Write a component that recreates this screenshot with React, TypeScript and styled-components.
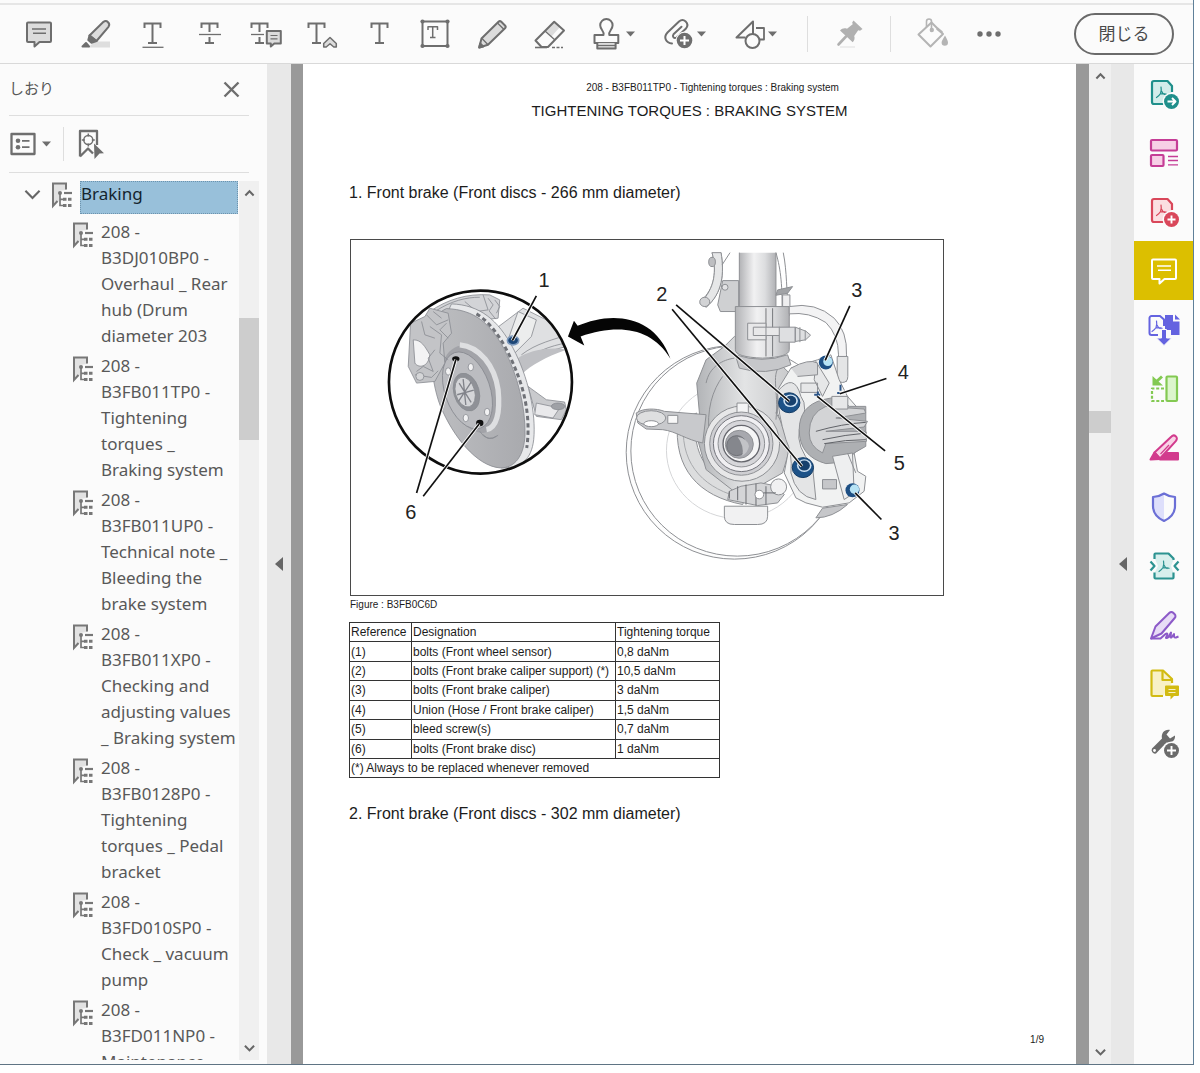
import React from "react";
import styled, { createGlobalStyle } from "styled-components";

const ink = "#6e6e6e";
const soft = "#dcdcdc";
const line = "#dedede";

const GlobalStyle = createGlobalStyle`
  *, *::before, *::after { box-sizing: border-box; }
  body {
    margin: 0;
    background: #ffffff;
    font-family: "Noto Sans", "Open Sans", "Noto Sans CJK JP", sans-serif;
    color: #585858;
  }
  button { font: inherit; color: inherit; background: none; border: 0; padding: 0; cursor: pointer; }
  svg { display: block; flex: none; }
`;

const Shell = styled.div`
  height: 100vh;
  padding: 0 6px 8px 0;
`;

const Window = styled.div`
  height: 100%;
  display: flex;
  flex-direction: column;
  background: #fbfbfb;
  border-right: 1px solid #5f8099;
  border-bottom: 1px solid #5f7484;
  overflow: hidden;
`;

/* ---------- Top toolbar ---------- */

const Toolbar = styled.header`
  flex: none;
  margin-top: 3px;
  height: 61px;
  border-top: 2px solid #e6e6e6;
  border-bottom: 1px solid #d9d9d9;
  padding: 0 19px 0 11px;
  display: flex;
  align-items: center;
`;

const MarkupTools = styled.div`
  width: 566px;
  display: grid;
  grid-template-columns: repeat(10, 1fr);
  justify-items: center;
`;

const ToolButton = styled.button<{ $width?: number }>`
  width: ${(p) => (p.$width ? `${p.$width}px` : "auto")};
  height: 40px;
  display: flex;
  align-items: center;
  justify-content: center;
`;

const ToolToggle = styled.button`
  height: 26px;
  margin-right: 2px;
`;

const Divider = styled.span<{ $height: number }>`
  width: 1px;
  height: ${(p) => p.$height}px;
  background: ${line};
`;

const DividerGap = styled.span`
  width: 17px;
`;

const IconGap = styled.span`
  width: 6px;
`;

const CloseButton = styled.button`
  margin-left: auto;
  width: 100px;
  height: 42px;
  border: 2px solid #6a6a6a;
  border-radius: 21px;
  font-family: "Noto Sans CJK JP", sans-serif;
  font-size: 17px;
  line-height: 24px;
  padding-bottom: 2px;
  color: #4b4b4b;
`;

/* ---------- Body ---------- */

const Body = styled.div`
  flex: 1;
  min-height: 0;
  display: flex;
`;

const Sidebar = styled.aside`
  flex: none;
  width: 267px;
  display: flex;
  flex-direction: column;
`;

const SidebarHead = styled.div`
  margin: 0 18px 0 9px;
  height: 52px;
  padding-right: 9px;
  border-bottom: 1px solid ${line};
  display: flex;
  align-items: center;
  justify-content: space-between;
`;

const SidebarTitle = styled.h2`
  margin: 0;
  padding-bottom: 4px;
  font-family: "Noto Sans CJK JP", sans-serif;
  font-weight: 400;
  font-size: 15px;
  line-height: 24px;
`;

const SidebarTools = styled.div`
  margin: 0 18px 0 9px;
  height: 57px;
  border-bottom: 1px solid ${line};
  display: flex;
  align-items: center;
  gap: 12px;
`;

const TreeArea = styled.div`
  flex: 1;
  min-height: 0;
  margin: 8px 8px 4px 0;
  display: flex;
`;

const Tree = styled.ul`
  flex: 1;
  min-width: 0;
  margin: 0;
  padding: 0;
  list-style: none;
  overflow: hidden;
  font-size: 17px;
  line-height: 26px;
`;

const GroupRow = styled.div`
  display: flex;
  align-items: flex-start;
  gap: 8px;
  padding: 0 1px 0 24px;
  margin-bottom: 5px;
`;

const GroupLabel = styled.button`
  flex: 1;
  height: 33px;
  padding: 0 0 8px 1px;
  background: #98c0da;
  outline: 1px dotted #6d93ad;
  outline-offset: -1px;
  color: #14242e;
  text-align: left;
`;

const Children = styled.ul`
  margin: 0;
  padding: 0 0 0 72px;
  list-style: none;
  display: flex;
  flex-direction: column;
  gap: 4px;
`;

const Leaf = styled.li`
  display: flex;
  align-items: flex-start;
  gap: 8px;
`;

const LeafIcon = styled.span`
  padding-top: 2px;
`;

const LeafLabel = styled.button`
  white-space: pre;
  text-align: left;
`;

const ScrollTrack = styled.div<{ $width: number }>`
  flex: none;
  width: ${(p) => p.$width}px;
  background: #f0f0f0;
  display: flex;
  flex-direction: column;
  align-items: stretch;
`;

const ScrollArrow = styled.button`
  height: 24px;
  display: flex;
  align-items: center;
  justify-content: center;
`;

const ScrollSpace = styled.span<{ $grow: number }>`
  flex: ${(p) => p.$grow} 1 0;
`;

const ScrollThumb = styled.span<{ $height: number }>`
  flex: none;
  height: ${(p) => p.$height}px;
  background: #cdcdcd;
`;

const Gutter = styled.button<{ $width: number }>`
  flex: none;
  width: ${(p) => p.$width}px;
  background: #e8e8e8;
  display: flex;
  align-items: center;
  justify-content: center;
`;

/* ---------- Document ---------- */

const Viewer = styled.main`
  flex: 1;
  min-width: 0;
  display: flex;
  background: #999999;
  padding: 0 13px 0 12px;
`;

const Page = styled.article`
  flex: 1;
  min-width: 0;
  background: #ffffff;
  padding: 16px 32px 16px 46px;
  display: flex;
  flex-direction: column;
  align-items: flex-start;
  overflow: hidden;
  font-family: "Liberation Sans", Arial, sans-serif;
  color: #1c1c1c;
`;

const RunningHead = styled.p`
  align-self: center;
  margin: 0;
  padding-left: 32px;
  font-size: 10px;
  line-height: 16px;
`;

const DocTitle = styled.h1`
  align-self: center;
  margin: 3px 14px 0 0;
  font-weight: 400;
  font-size: 15px;
  line-height: 24px;
`;

const SectionTitle = styled.h2<{ $top: number }>`
  margin: ${(p) => p.$top}px 0 0;
  font-weight: 400;
  font-size: 16px;
  line-height: 24px;
`;

const Figure = styled.figure`
  width: 100%;
  max-width: 595px;
  margin: 34px 0 0;
  padding-left: 1px;
`;

const Plate = styled.svg`
  width: 100%;
  height: auto;
  border: 1px solid #4a4a4a;
`;

const Caption = styled.figcaption`
  padding-top: 1px;
  font-size: 10px;
  line-height: 16px;
`;

const Torques = styled.table`
  width: 371px;
  height: 156px;
  margin-top: 9px;
  border-collapse: collapse;
  table-layout: fixed;
  font-size: 12px;
  line-height: 16px;

  th, td {
    height: 19px;
    padding: 0 1px;
    border: 1px solid #333333;
    font-weight: 400;
    text-align: left;
    white-space: nowrap;
  }
`;

const Folio = styled.p`
  align-self: flex-end;
  margin: auto 0 0;
  font-size: 10px;
  line-height: 16px;
`;

/* ---------- Right rail ---------- */

const Rail = styled.nav`
  flex: none;
  width: 59px;
  display: flex;
  flex-direction: column;
`;

const RailButton = styled.button<{ $active?: boolean }>`
  height: 59px;
  display: flex;
  align-items: center;
  justify-content: center;
  background: ${(p) => (p.$active ? "#dcbf00" : "transparent")};
`;

/* ---------- Icons ---------- */

const Glyph = ({ children, w = 36, h = 36, color = ink, sw = 2 }: {
  children: React.ReactNode; w?: number; h?: number; color?: string; sw?: number;
}) => (
  <svg width={w} height={h} viewBox={`0 0 ${w} ${h}`} fill="none" stroke={color} strokeWidth={sw} strokeLinejoin="round" aria-hidden="true">
    {children}
  </svg>
);

const Caret = () => (
  <svg width="9" height="6" viewBox="0 0 9 6" aria-hidden="true"><path d="M0 0.5h9L4.500 5.500z" fill={ink} /></svg>
);

const SerifT = ({ x = 18.500 }: { x?: number }) => (
  <path strokeLinejoin="miter" d={`M${x - 8} 12V7.500h16V12M${x} 7.500v19.500M${x - 4.500} 27h9`} />
);

const CommentIcon = ({ color = ink, fill = soft }: { color?: string; fill?: string }) => (
  <Glyph color={color}>
    <path d="M7 6.500h22a1 1 0 0 1 1 1v17.500a1 1 0 0 1-1 1H18.500l-5 4.500V26H7a1 1 0 0 1-1-1V7.500a1 1 0 0 1 1-1z" fill={fill} />
    <path d="M11 13h14M12 17.200h13" strokeWidth="1.400" />
  </Glyph>
);

const HighlighterIcon = () => (
  <Glyph>
    <path d="M10 31.500L17 25.500h15v6z" fill="#dedede" stroke="none" />
    <path d="M11.500 19.500L25.500 5.800a3.600 3.600 0 0 1 5 5L18.500 25z" fill={soft} />
    <path d="M11.500 19.500l7 5.500-5 1.800-3.200-2.800z" fill={ink} />
    <path d="M4.500 30.500l3.500-3.500 3 3.500z" fill={ink} />
  </Glyph>
);

const UnderlineIcon = () => <Glyph><SerifT /><path d="M8.500 31.300h21" strokeWidth="1.300" /></Glyph>;

const StrikeIcon = () => (
  <Glyph>
    <SerifT />
    <path d="M8 18.500h21" stroke="#fbfbfb" strokeWidth="5" />
    <path d="M8 18.500h22" strokeWidth="1.300" />
  </Glyph>
);

const ReplaceIcon = () => (
  <Glyph>
    <SerifT x={11.500} />
    <path d="M2 18.500h17" stroke="#fbfbfb" strokeWidth="5" />
    <path d="M3 18.500h13" strokeWidth="1.300" />
    <path d="M18.500 15h14v12h-7l-3.500 3.500V27h-3.500z" stroke="#fbfbfb" strokeWidth="5" />
    <path d="M18.800 15h14v12.500h-6.500l-3.500 3V27.500h-4z" fill={soft} />
    <path d="M22.500 19.500h7M22.500 22.800h7" strokeWidth="1.200" />
  </Glyph>
);

const InsertIcon = () => (
  <Glyph>
    <SerifT x={12.500} />
    <path d="M19.700 31v-3.500l6.300-6 6.300 6V31h-2.500L26 27.800 22.200 31z" stroke="#fbfbfb" strokeWidth="4" />
    <path d="M19.700 31v-3.500l6.300-6 6.300 6V31h-2.500L26 27.800 22.200 31z" fill={soft} strokeWidth="1.500" />
  </Glyph>
);

const TextIcon = () => <Glyph><SerifT /></Glyph>;

const TextBoxIcon = () => (
  <Glyph>
    <rect x="5.500" y="5.500" width="25" height="24.500" />
    {[[5.500, 5.500], [30.500, 5.500], [5.500, 30], [30.500, 30]].map(([x, y]) => (
      <circle key={`${x}-${y}`} cx={x} cy={y} r="2.100" fill={ink} stroke="none" />
    ))}
    <path strokeWidth="1.500" d="M11 14v-3.300h9.500V14M15.700 10.700V21.500M13 21.500h5.500" />
  </Glyph>
);

const PencilIcon = () => (
  <Glyph>
    <path d="M5.200 31.500l2.300-9L24.500 5.800a2 2 0 0 1 2.800 0l3.700 3.700a2 2 0 0 1 0 2.800L14 28.800z" fill={soft} />
    <path d="M8 22.500l6 6.300M23.500 7l6.300 6.300" strokeWidth="1.300" />
    <path d="M5.200 31.500l1-4 3 3z" fill={ink} />
  </Glyph>
);

const EraserIcon = () => (
  <Glyph>
    <path d="M15 14.500l9-8.500 5 5-8.500 9.500z" fill={soft} stroke="none" />
    <path d="M4.500 24.500L23.200 5.700 33 14.500 17 31h-6.500z" />
    <path d="M14 15l10 9" strokeWidth="1.300" />
    <path d="M4 31.500h12" strokeWidth="1.600" />
    <path d="M21 31.500h11" strokeWidth="1.300" strokeDasharray="3 1.500" />
  </Glyph>
);

const StampIcon = () => (
  <Glyph>
    <path d="M13.500 19c1.200-4-3.300-5-3.300-9.700a6.200 6.200 0 0 1 12.400 0c0 4.700-4.500 5.700-3.300 9.700h9v8H4.500v-8z" />
    <path d="M7.300 27v5.500h18.300V27" fill={soft} />
    <path d="M7 29.500h19" strokeWidth="1.200" />
  </Glyph>
);

const ClipIcon = () => (
  <Glyph>
    <path strokeLinecap="round" d="M11 27.500C5 27 2 21.500 6.500 16.500L18 5.500c4.500-4 11 1.500 7 7L15.500 21.500c-2.500 1.500-4.500-1-3-3.200l8-7.500" />
    <circle cx="23.500" cy="24.500" r="9" fill="#fbfbfb" stroke="none" />
    <circle cx="23.500" cy="24.500" r="7.800" fill={ink} stroke="none" />
    <path d="M23.500 20v9M19 24.500h9" stroke="#fff" />
  </Glyph>
);

const ShapesIcon = () => (
  <Glyph>
    <path d="M21 20V5.500L4.500 21.500h9" />
    <path d="M24 12h8v11.500h-4" strokeWidth="1.800" />
    <circle cx="20.500" cy="25" r="7" fill="#fbfbfb" />
  </Glyph>
);

const PinIcon = () => (
  <Glyph color="#b0b0b0">
    <path d="M22.500 4.500l9 8.500-2.500 1.800-1.800-.5-4 5.700c1 2.500 0 4.800-1.500 6.300L9 14.500c2-2.200 4.500-2.800 7-1.800l5.700-4.400-.5-1.800z" fill="#b0b0b0" stroke="none" />
    <path d="M15 20.500L7.500 28.500" strokeWidth="2.600" strokeLinecap="round" />
    <path d="M9 31h15" stroke="#e9e9e9" strokeWidth="1.500" />
  </Glyph>
);

const BucketIcon = () => (
  <Glyph color="#b4b4b4">
    <path d="M4.500 18.500L17.500 6.500 29 18 16.500 30.500z" />
    <path d="M12.500 11V5.500a2.500 2.500 0 0 1 5 0V13" strokeWidth="1.600" />
    <circle cx="17.800" cy="14" r="2.200" fill="#b4b4b4" stroke="none" />
    <path d="M23 12.500l5 4" strokeWidth="2.800" />
    <path d="M31 19.500c1.500 3 3 5 3 7a3.200 3.200 0 0 1-6.400 0c0-2 1.900-4 3.400-7z" fill="#b4b4b4" stroke="none" />
  </Glyph>
);

const DotsIcon = () => (
  <svg width="26" height="8" viewBox="0 0 26 8" fill={ink} aria-hidden="true">
    <circle cx="4" cy="4" r="2.700" /><circle cx="13" cy="4" r="2.700" /><circle cx="22" cy="4" r="2.700" />
  </svg>
);

const CrossIcon = () => <Glyph w={17} h={17} sw={2.400}><path d="M1.500 1.500l14 14M15.500 1.500l-14 14" /></Glyph>;

const OptionsIcon = () => (
  <Glyph w={26} h={24} sw={2.300}>
    <rect x="1.500" y="2" width="23" height="20" />
    <circle cx="8" cy="8.800" r="2.300" fill={ink} stroke="none" />
    <circle cx="8" cy="15.200" r="2.300" fill={ink} stroke="none" />
    <path d="M12 8.800h7.500M12 15.200h7.500" strokeWidth="1.800" />
  </Glyph>
);

const FindBookmarkIcon = () => (
  <Glyph w={28} h={32} sw={2.300}>
    <path d="M4 28.500V3h17v14M4 28.500l8-8 5 5" />
    <circle cx="12.300" cy="12" r="4.500" strokeWidth="1.500" />
    <path d="M12.300 5.500v3M12.300 15.500v3M5.800 12h3M15.800 12h3" strokeWidth="1.500" />
    <path d="M18 15.500l10 9.800-4.500.2L18.500 31z" fill={ink} stroke="none" />
  </Glyph>
);

const BookmarkIcon = () => (
  <svg width="21" height="28" viewBox="0 0 21 28" fill="none" stroke="#777777" strokeWidth="2" aria-hidden="true">
    <path d="M2 24V2.500h13V9L8 10v10z" fill="#e2e2e2" stroke="none" />
    <path d="M15 8.500V2.500H2V25l4.500-5" />
    <path d="M9 12v12.500h4M9 18.300h4" strokeWidth="1.700" />
    <path d="M13 12h8" strokeWidth="2.200" />
    <path d="M12 18.300h3.500M17 18.300h3.500M12 24.500h3.500M17 24.500h3.500" strokeWidth="3" />
    <circle cx="9" cy="12" r="2" fill="#777" stroke="none" />
  </svg>
);

const Chevron = ({ up, size = 11 }: { up?: boolean; size?: number }) => (
  <svg width={size} height={size * 0.75} viewBox="0 0 12 9" fill="none" stroke="#666" strokeWidth={size > 12 ? 1.500 : 2.200} aria-hidden="true">
    <path d={up ? "M1.500 7L6 2.500 10.500 7" : "M1 2l5 5 5-5"} />
  </svg>
);

const LeftTriangle = () => (
  <svg width="8" height="14" viewBox="0 0 8 14" aria-hidden="true"><path d="M8 0v14L0 7z" fill="#666" /></svg>
);

const PdfMark = ({ x, y }: { x: number; y: number }) => (
  <path strokeWidth="1.200" strokeLinecap="round" d={`M${x - 0.5} ${y}q.8 3.500-.5 6.500-1.500 2.500-4 4M${x - 1} ${y + 7}q3-.8 6 .3M${x} ${y + 4}q1 2.500 3 3.500`} />
);

const railPage = "M18 28H8a2 2 0 0 1-2-2V7a2 2 0 0 1 2-2h13.500l4.500 5V16";

const ExportIcon = () => (
  <Glyph color="#1f8f8b" sw={2.200}>
    <path d={railPage} fill="#d3ecea" />
    <PdfMark x={15.500} y={11} />
    <circle cx="25.500" cy="25.500" r="9" fill="#fbfbfb" stroke="none" />
    <circle cx="25.500" cy="25.500" r="7.500" fill="#1f8f8b" stroke="none" />
    <path d="M21.500 25.500h7M26 22l3.500 3.500L26 29" stroke="#fff" strokeWidth="1.900" />
  </Glyph>
);

const LayoutIcon = () => (
  <Glyph color="#c53d96" sw={2.200}>
    <rect x="5" y="5" width="26" height="10.500" rx="1" fill="#f7cfe6" />
    <rect x="5" y="20" width="12.500" height="11" rx="1" fill="#f7cfe6" />
    <path d="M22 21.500h10M22 25.500h10M22 29.800h10" strokeWidth="1.300" />
  </Glyph>
);

const CreateIcon = () => (
  <Glyph color="#d9475a" sw={2.200}>
    <path d={railPage} fill="#fbdfe1" />
    <PdfMark x={15.500} y={11} />
    <circle cx="25.500" cy="25.500" r="9" fill="#fbfbfb" stroke="none" />
    <circle cx="25.500" cy="25.500" r="7.500" fill="#d9475a" stroke="none" />
    <path d="M25.500 21.500v8M21.500 25.500h8" stroke="#fff" strokeWidth="1.900" />
  </Glyph>
);

const CombineIcon = () => (
  <Glyph color="#6463e0" sw={2}>
    <path d="M12 23H5.500a2 2 0 0 1-2-2V6a2 2 0 0 1 2-2H14l4 3.500V14" />
    <PdfMark x={11} y={9} />
    <path d="M19 3h8v6.500h6.500V23H25v-5h-6z" fill="#6463e0" stroke="none" />
    <path d="M29 2.500l5 5h-5z" fill="#6463e0" stroke="none" />
    <path d="M15.500 17.500h5V26h5l-7.500 7.500L10.500 26h5z" fill="#6463e0" stroke="#fbfbfb" strokeWidth="1" />
  </Glyph>
);

const OrganizeIcon = () => (
  <Glyph color="#83c952" sw={2.200}>
    <rect x="20.500" y="5.500" width="10.500" height="24.500" rx="1" fill="#dcf5cc" />
    <path d="M18 17.500H6V30h12" strokeDasharray="3 1.800" />
    <path d="M16 5.500L10 11" strokeWidth="3" />
    <path d="M6.500 5v9.500H17z" fill="#83c952" stroke="none" />
  </Glyph>
);

const RedactIcon = () => (
  <Glyph color="#d23b8d" sw={2}>
    <path d="M14 29.500l7-6.500h11v6.500z" fill="#d23b8d" />
    <path d="M8.500 22.500L25.500 6.500a3 3 0 0 1 4.500 4.300L14 28.500z" fill="#f9d3e6" />
    <path d="M4.500 29.500l4-7 5.500 6.500z" fill="#d23b8d" />
    <path d="M14.500 24l8.500-9" strokeWidth="1.200" />
  </Glyph>
);

const ShieldIcon = () => (
  <Glyph color="#6b6fd6" sw={2.200}>
    <path d="M18 4.500c-3.500 2.300-7 3.300-11 3.500v9c0 7 4.500 12 11 15z" fill="#dedffb" stroke="none" />
    <path d="M18 4.500c3.500 2.300 7 3.300 11 3.500v9c0 7-4.500 12-11 15-6.500-3-11-8-11-15V8c4-.2 7.500-1.200 11-3.500z" />
  </Glyph>
);

const CompressIcon = () => (
  <Glyph color="#2c9391" sw={2.200}>
    <path d="M8.500 10V6.500a1 1 0 0 1 1-1h13l5 4.500v2L25 18l2.500 7v4.500a1 1 0 0 1-1 1h-17a1 1 0 0 1-1-1V25l3.500-7z" fill="#d8efed" stroke="none" />
    <path d="M8.500 11V6.500a1 1 0 0 1 1-1h13l5 5V12M27.500 24.500v5a1 1 0 0 1-1 1h-17a1 1 0 0 1-1-1v-5" />
    <PdfMark x={18} y={13} />
    <path d="M4.500 13.500L8.500 18l-4 4.500M32.500 13.500l-4 4.500 4 4.500" />
  </Glyph>
);

const SignIcon = () => (
  <Glyph color="#8c5ac8" sw={2}>
    <path d="M5 31.500l4.500-12L23.500 5.800a2.600 2.600 0 0 1 3.700 0l1.500 1.500a2.600 2.600 0 0 1 0 3.700L15.500 26.500z" fill="#e8dcf6" />
    <path d="M5 31.500h9.500l5-4.500c2-1.500 2.500.5 1 2.500s.5 2 2 .5l2.500-4.500c0 3-1.500 5.500.5 5l2.500-3.500c0 3 0 4 2 3.500l2.500-1" />
  </Glyph>
);

const NotesIcon = () => (
  <Glyph color="#d2bb12" sw={2.200}>
    <path d="M17 30H6.500a1 1 0 0 1-1-1V5.500a1 1 0 0 1 1-1H17l9 8.500v4" fill="#f8f1c6" />
    <path d="M16.500 5v9H25" />
    <path d="M20 19.500h12a1 1 0 0 1 1 1v8.500a1 1 0 0 1-1 1h-4l-3.500 3.500V30H20a1 1 0 0 1-1-1v-8.500a1 1 0 0 1 1-1z" fill="#d2bb12" stroke="none" />
    <path d="M22.500 23.500h7M22.500 26.500h7" stroke="#f8f1c6" strokeWidth="1.200" />
  </Glyph>
);

const WrenchIcon = () => (
  <Glyph color="#6b6b6b">
    <path d="M6 23.500L16 13.500c-1.200-5 2.500-9.500 8-8.500l-3.500 4.500 3.500 4 5-3c.5 5-3.500 8-8.500 7L10 28.500a3.500 3.500 0 0 1-4-5z" fill="#6b6b6b" stroke="none" />
    <circle cx="8.500" cy="25.500" r="1.400" fill="#fff" stroke="none" />
    <circle cx="25.500" cy="25.500" r="9" fill="#fbfbfb" stroke="none" />
    <circle cx="25.500" cy="25.500" r="7.500" fill="#6b6b6b" stroke="none" />
    <path d="M25.500 21v9M21 25.500h9" stroke="#fff" strokeWidth="1.900" />
  </Glyph>
);

/* ---------- Exploded drawing ---------- */

const Leader = ({ d }: { d: string }) => (
  <>
    <path d={d} stroke="#ffffff" strokeWidth="10" fill="none" />
    <path d={d} stroke="#111111" strokeWidth="5" fill="none" />
  </>
);

const Mark = ({ x, y, children }: { x: number; y: number; children: string }) => (
  <text x={x} y={y} fontSize="60" textAnchor="middle" fill="#222222" fontFamily="Liberation Sans, Arial, sans-serif">{children}</text>
);

const BigBolt = ({ x, y }: { x: number; y: number }) => (
  <g>
    <ellipse cx={x} cy={y} rx="32" ry="30" fill="#1d5288" stroke="#123a63" strokeWidth="3" />
    <ellipse cx={x + 4} cy={y - 6} rx="22" ry="19" fill="#cfe2f3" />
    <ellipse cx={x + 4} cy={y - 6} rx="17" ry="15" fill="#17406d" />
  </g>
);

const SmallBolt = ({ x, y }: { x: number; y: number }) => (
  <g>
    <circle cx={x} cy={y} r="21" fill="#1d4f84" />
    <circle cx={x + 6} cy={y - 3} r="14" fill="#b7e3f5" />
  </g>
);

const DiscInset = () => (
  <g transform="translate(87 0)" strokeWidth="2.500" stroke="#8a8c92">
    <clipPath id="inset"><circle cx="302" cy="427" r="272" /></clipPath>
    <linearGradient id="face"><stop offset="0" stopColor="#bdbec1" /><stop offset="1" stopColor="#a9aaae" /></linearGradient>
    <circle cx="302" cy="427" r="275" fill="#ffffff" stroke="none" />
    <g clipPath="url(#inset)">
      <path d="M350 265L430 205 520 250 575 285 560 320 450 350 415 400 370 330z" fill="#dfe0e2" />
      <path d="M385 300L415 215 470 240 455 290 400 345z" fill="#eceded" />
      <path d="M425 345C470 310 520 300 580 280M432 365C480 325 530 315 580 305" fill="none" />
      <path d="M410 360C440 330 520 320 560 330 500 350 450 380 430 400z" fill="#bfc0c4" stroke="none" />
      <path d="M445 440L500 480 555 487 560 510 545 540 470 530z" fill="#c9cacd" />
      <path d="M470 490L540 505 520 535 465 525z" fill="#e9e9eb" />
      <ellipse cx="535" cy="500" rx="20" ry="10" fill="#9fa1a6" />
      <path d="M150 215C200 180 260 160 330 165L360 180 355 235 310 240 240 200 170 240z" fill="#d3d4d7" />
      <path d="M255 185L290 215 325 210 310 165M325 175l15 20-12 18 20 25M345 180l15 20-10 20M165 215C215 182 260 172 300 172" fill="none" />
      <path d="M215 192C300 195 355 240 400 325 445 410 470 520 462 600 455 660 425 685 365 685L240 600 150 330z" fill="#e7e8ea" />
      <path d="M290 222C345 255 385 330 412 400 440 470 452 550 441 625" fill="none" stroke="#6f7177" strokeWidth="9" strokeDasharray="13 9" />
      <path d="M200 206C285 210 330 250 372 325 415 410 437 500 436 585 433 650 405 685 362 685 290 680 220 590 182 500 150 420 130 230 200 206z" fill="url(#face)" />
      <path d="M215 330C260 295 325 330 350 410 372 490 365 570 310 580 265 580 200 520 190 420 185 370 195 345 215 330z" fill="#a2a3a8" stroke="none" />
      <path d="M240 315C300 320 345 380 355 450 362 520 350 565 320 570" fill="none" stroke="#dedfe1" strokeWidth="16" />
      <ellipse cx="263" cy="452" rx="68" ry="120" transform="rotate(-19 263 452)" fill="#bbbcc0" />
      <ellipse cx="260" cy="457" rx="38" ry="58" transform="rotate(-16 260 457)" fill="#8f9197" />
      <ellipse cx="256" cy="457" rx="29" ry="46" transform="rotate(-16 256 457)" fill="#d4d5d8" />
      <path d="M238 430l36 58M232 465l50-14M250 418l8 78M236 485l38-58" fill="none" stroke="#81838a" strokeWidth="4" />
      {[[273, 382], [205, 395], [322, 517], [258, 535]].map(([x, y]) => (
        <ellipse key={x} cx={x} cy={y} rx="8" ry="11" fill="#f2f2f3" />
      ))}
      <path d="M310 585q18 20 40 5M300 575q22 36 55 12" fill="none" />
      <path d="M92 250L135 230 150 205 205 220 215 280 190 310 195 370 165 425 110 430 85 380z" fill="#c3c4c7" />
      <path d="M100 300C125 300 135 320 150 345 145 385 115 385 105 370z" fill="#f3f3f4" />
      <path d="M140 225l30 30 35-15M150 260l35 25-5 55 25 20M105 405l50 8 20-20M125 245l10 40 30 10M165 330l-20 25 15 40M160 215l25 20M200 250l-20 20 25 25M110 395l20-15 30 15" fill="none" />
      <circle cx="120" cy="410" r="12" fill="#d5d6d8" />
    </g>
    <circle cx="302" cy="427" r="275" fill="none" stroke="#0d0d0d" strokeWidth="8" />
    <ellipse cx="400" cy="302" rx="17" ry="13" fill="#1d4777" stroke="#7c98bb" strokeWidth="5" />
    <ellipse cx="228" cy="357" rx="11" ry="8" fill="#111" stroke="none" />
    <ellipse cx="300" cy="550" rx="11" ry="10" fill="#111" stroke="none" />
    <g>
      <Leader d="M470 168L398 302" />
      <Leader d="M228 360L110 760" />
      <Leader d="M298 553L130 770" />
    </g>
    <path d="M565 290L583 243 594 258C690 215 825 220 873 357 815 262 715 252 603 290L614 317z" fill="#050505" stroke="none" />
  </g>
);

const HubView = () => (
  <g transform="translate(777 0)" strokeWidth="3" stroke="#8e9094">
    <ellipse cx="375" cy="638" rx="325" ry="321" fill="#fdfdfd" />
    <ellipse cx="384" cy="634" rx="320" ry="316" fill="#ffffff" />
    <ellipse cx="385" cy="632" rx="214" ry="205" fill="#ffffff" stroke="#d5d6d8" />
    <path d="M205 540C190 690 270 770 400 795L420 745C300 735 240 640 262 520z" fill="#dcddde" />
    <path d="M222 560C215 680 290 750 400 775" fill="none" stroke="#a8aaad" />
    <path d="M345 800h130v30q0 25-30 25h-70q-30 0-30-25z" fill="#f1f1f2" />
    {/* strut and hose bracket */}
    <path d="M305 38C325 90 325 130 300 165L272 180 280 202 345 215 370 215 385 180V38z" fill="#ffffff" stroke="none" />
    <path d="M308 38C322 90 318 145 275 182M335 38C345 100 340 160 290 202" fill="none" />
    <path d="M308 38H335C345 100 340 160 290 202L272 190C318 145 322 90 308 38z" fill="#e6e7e8" />
    <ellipse cx="308" cy="66" rx="10" ry="14" fill="#bdbec1" />
    <ellipse cx="286" cy="186" rx="15" ry="14" fill="#d2d3d5" />
    <path d="M338 75L362 38" fill="none" />
    <path d="M340 122h48v93h-55l-8-20z" fill="#cfd0d2" />
    <circle cx="347" cy="142" r="9" fill="#e2e2e4" />
    <path d="M500 38C515 90 520 140 518 230M522 38c12 60 8 110 18 190" fill="none" />
    <defs>
      <linearGradient id="tube"><stop offset="0" stopColor="#b2b3b6" /><stop offset=".4" stopColor="#f1f1f2" /><stop offset=".7" stopColor="#dcdddf" /><stop offset="1" stopColor="#b0b1b4" /></linearGradient>
      <linearGradient id="cast"><stop offset="0" stopColor="#b2b4b7" /><stop offset=".5" stopColor="#e3e4e5" /><stop offset="1" stopColor="#c7c8ca" /></linearGradient>
    </defs>
    <path d="M390 38H500V215H390z" fill="url(#tube)" stroke="none" />
    <path d="M390 38V205M500 38V205" />
    <path d="M505 150l45-10-15 20-35 6z" fill="#a1a3a6" />
    <path d="M520 165h22v40h-22z" fill="#eeeeef" />
    {/* knuckle */}
    <path d="M375 290L345 320 290 360 262 430 270 520 262 590 290 690 380 760 440 745 520 700 550 600 500 520 540 400 500 360z" fill="url(#cast)" />
    <path d="M80 520C100 505 140 505 165 515L290 525 280 610C230 600 200 575 160 570L110 568 85 550z" fill="#c8c9cc" />
    <ellipse cx="125" cy="535" rx="44" ry="22" fill="#dedfe0" />
    <ellipse cx="125" cy="552" rx="22" ry="9" fill="#ffffff" />
    <path d="M175 527h30v24h-30z" fill="#f8f8f8" />
    <path d="M290 430C300 380 340 360 375 355M300 590C290 510 310 450 340 410M500 540C510 450 480 400 520 370" fill="none" />
    <path d="M378 200H540V330Q540 352 460 355 378 352 378 330z" fill="url(#tube)" />
    <path d="M470 205V350M490 205V350" stroke="#74767a" />
    <path d="M378 345Q460 372 535 345L545 375Q470 410 390 385z" fill="#c6c7ca" />
    <path d="M415 250h55v50h-55zM432 262h80v25h-80z" fill="#e8e8e9" />
    <path d="M510 262h48v45h-48zM558 262l32 12 14 12-15 14-31 5z" fill="#dedfe1" />
    <path d="M572 262v45M588 272v30M540 200Q620 185 675 235 715 275 712 345V425H688V345Q688 285 650 248 600 215 540 222z" fill="#f3f3f4" />
    <path d="M684 350h32v60q0 18-16 18t-16-18z" fill="#e4e5e6" />
    {/* bearing */}
    <circle cx="398" cy="612" r="113" fill="#e7e7e8" />
    <path d="M383 490h34v40h-34z" fill="#f4f4f5" />
    <circle cx="396" cy="612" r="95" fill="#cfcfd3" />
    <circle cx="396" cy="612" r="84" fill="#f0eff2" stroke="#73747b" />
    <circle cx="396" cy="612" r="70" fill="#d6d6da" />
    <circle cx="396" cy="612" r="55" fill="#f5f5f6" stroke="#65666d" strokeWidth="4" />
    <circle cx="390" cy="614" r="42" fill="#a7a8ae" />
    <circle cx="382" cy="618" r="30" fill="#85878d" stroke="#6e7076" />
    <path d="M385 592q30 4 34 28-4 20-20 28 6-30-14-56z" fill="#c2c3c7" stroke="none" />
    {/* lower ball joint */}
    <path d="M360 755l35-15 60-10 50 10 20 25-20 25-60 8-90-18z" fill="#d4d5d7" />
    <circle cx="508" cy="742" r="24" fill="#f1f1f2" />
    <path d="M385 740v42M410 735v60M440 732v66M470 740v55M360 755v22M450 760h50" fill="none" stroke="#696b70" />
    <circle cx="450" cy="765" r="13" fill="#ffffff" />
    {/* caliper */}
    <path d="M505 450L545 385 625 360 665 345 690 420 715 470 750 510 770 580 765 620 735 640 745 695 770 710 765 755 720 790 640 803 590 790 560 775 525 700 540 620 505 520z" fill="#f1f2f2" />
    <path d="M505 455Q555 395 575 470 600 500 570 570 560 620 610 680L620 780Q560 770 545 700 550 640 530 600 505 520 505 455z" fill="#e4e5e6" />
    <path d="M570 570Q570 500 640 480L690 470 720 500H770V620L735 640Q720 670 650 672 570 650 570 570z" fill="#aeb0b3" />
    <path d="M600 580Q600 520 650 500L765 508 770 520 680 535 775 545 765 562 650 575 770 575 772 605 650 612 640 640Q600 620 600 580z" fill="#d3d4d6" />
    <path d="M620 575Q700 552 770 548M640 600Q710 585 772 580M645 612Q710 600 770 600" stroke="#606267" fill="none" />
    <path d="M620 365L660 430 640 470 615 420zM575 430h50v28h-50zM668 470h48v38h-48z" fill="#e6e7e8" />
    <path d="M545 385Q600 355 625 370V405L565 410" fill="#d4d5d7" />
    <path d="M670 650L705 780 735 760 730 640z" fill="#eeeff0" />
    <path d="M640 720h42v28h-42zM715 640l25 60M620 835Q670 835 715 795L640 806z" fill="#c6c7ca" />
    <g stroke="#2c5589" strokeWidth="6"><path d="M694 435v18M684 460h18M615 465h18M626 455v18" /></g>
    <g stroke="none">
      <BigBolt x={540} y={489} />
      <BigBolt x={581} y={684} />
      <SmallBolt x={650} y={368} />
      <SmallBolt x={730} y={752} />
    </g>
    <Leader d="M200 195L540 485" />
    <Leader d="M188 208L578 680" />
    <Leader d="M722 198L648 362" />
    <Leader d="M832 416L692 462" />
    <Leader d="M828 634L624 470" />
    <Leader d="M817 840L738 760" />
  </g>
);

const BrakePlate = () => (
  <Plate viewBox="0 0 1779 1068" role="img" aria-label="Front brake disc and caliper">
    <DiscInset />
    <HubView />
    <Mark x={580} y={141}>1</Mark>
    <Mark x={180} y={838}>6</Mark>
    <Mark x={934} y={183}>2</Mark>
    <Mark x={1520} y={170}>3</Mark>
    <Mark x={1660} y={418}>4</Mark>
    <Mark x={1648} y={690}>5</Mark>
    <Mark x={1632} y={903}>3</Mark>
  </Plate>
);

/* ---------- Data ---------- */

const markupTools = [
  { label: "Sticky note", icon: <CommentIcon /> },
  { label: "Highlight", icon: <HighlighterIcon /> },
  { label: "Underline", icon: <UnderlineIcon /> },
  { label: "Strikethrough", icon: <StrikeIcon /> },
  { label: "Replace text", icon: <ReplaceIcon /> },
  { label: "Insert text", icon: <InsertIcon /> },
  { label: "Text comment", icon: <TextIcon /> },
  { label: "Text box", icon: <TextBoxIcon /> },
  { label: "Pencil", icon: <PencilIcon /> },
  { label: "Eraser", icon: <EraserIcon /> },
];

const menuTools = [
  { label: "Stamp", icon: <StampIcon /> },
  { label: "Attach", icon: <ClipIcon /> },
  { label: "Shapes", icon: <ShapesIcon /> },
];

const bookmarks = [
  "208 -\nB3DJ010BP0 -\nOverhaul _ Rear\nhub (Drum\ndiameter 203",
  "208 -\nB3FB011TP0 -\nTightening\ntorques _\nBraking system",
  "208 -\nB3FB011UP0 -\nTechnical note _\nBleeding the\nbrake system",
  "208 -\nB3FB011XP0 -\nChecking and\nadjusting values\n_ Braking system",
  "208 -\nB3FB0128P0 -\nTightening\ntorques _ Pedal\nbracket",
  "208 -\nB3FD010SP0 -\nCheck _ vacuum\npump",
  "208 -\nB3FD011NP0 -\nMaintenance",
];

const torqueRows = [
  ["(1)", "bolts (Front wheel sensor)", "0,8 daNm"],
  ["(2)", "bolts (Front brake caliper support) (*)", "10,5 daNm"],
  ["(3)", "bolts (Front brake caliper)", "3 daNm"],
  ["(4)", "Union (Hose / Front brake caliper)", "1,5 daNm"],
  ["(5)", "bleed screw(s)", "0,7 daNm"],
  ["(6)", "bolts (Front brake disc)", "1 daNm"],
];

const railTools = [
  { label: "Export", icon: <ExportIcon /> },
  { label: "Edit layout", icon: <LayoutIcon /> },
  { label: "Create", icon: <CreateIcon /> },
  { label: "Comment", icon: <CommentIcon color="#ffffff" fill="none" />, active: true },
  { label: "Combine", icon: <CombineIcon /> },
  { label: "Organize pages", icon: <OrganizeIcon /> },
  { label: "Redact", icon: <RedactIcon /> },
  { label: "Protect", icon: <ShieldIcon /> },
  { label: "Compress", icon: <CompressIcon /> },
  { label: "Fill and sign", icon: <SignIcon /> },
  { label: "Send for comments", icon: <NotesIcon /> },
  { label: "More tools", icon: <WrenchIcon /> },
];

const Scrollbar = ({ width, before, thumb, after }: { width: number; before: number; thumb: number; after: number }) => (
  <ScrollTrack $width={width}>
    <ScrollArrow aria-label="Scroll up"><Chevron up /></ScrollArrow>
    <ScrollSpace $grow={before} />
    <ScrollThumb $height={thumb} />
    <ScrollSpace $grow={after} />
    <ScrollArrow aria-label="Scroll down"><Chevron /></ScrollArrow>
  </ScrollTrack>
);

export default function App() {
  return (
    <Shell>
      <GlobalStyle />
      <Window>
        <Toolbar>
          <MarkupTools>
            {markupTools.map((t) => <ToolButton key={t.label} aria-label={t.label}>{t.icon}</ToolButton>)}
          </MarkupTools>
          {menuTools.map((t) => (
            <ToolButton key={t.label} $width={71} aria-label={t.label}>{t.icon}<Caret /></ToolButton>
          ))}
          <DividerGap />
          <Divider $height={36} />
          <ToolButton $width={82} aria-label="Pin"><PinIcon /></ToolButton>
          <Divider $height={36} />
          <ToolButton $width={82} aria-label="Fill colour"><BucketIcon /></ToolButton>
          <ToolButton $width={32} aria-label="More"><DotsIcon /></ToolButton>
          <CloseButton>閉じる</CloseButton>
        </Toolbar>

        <Body>
          <Sidebar>
            <SidebarHead>
              <SidebarTitle>しおり</SidebarTitle>
              <button aria-label="Close panel"><CrossIcon /></button>
            </SidebarHead>
            <SidebarTools>
              <ToolButton $width={42} aria-label="Bookmark options">
                <OptionsIcon /><IconGap /><Caret />
              </ToolButton>
              <Divider $height={34} />
              <ToolButton aria-label="Find bookmark"><FindBookmarkIcon /></ToolButton>
            </SidebarTools>
            <TreeArea>
              <Tree>
                <li>
                  <GroupRow>
                    <ToolToggle aria-label="Collapse"><Chevron size={17} /></ToolToggle>
                    <BookmarkIcon />
                    <GroupLabel>Braking</GroupLabel>
                  </GroupRow>
                  <Children>
                    {bookmarks.map((b) => (
                      <Leaf key={b}>
                        <LeafIcon><BookmarkIcon /></LeafIcon>
                        <LeafLabel>{b}</LeafLabel>
                      </Leaf>
                    ))}
                  </Children>
                </li>
              </Tree>
              <Scrollbar width={20} before={113} thumb={122} after={596} />
            </TreeArea>
          </Sidebar>
          <Gutter $width={24} aria-label="Collapse left panel"><LeftTriangle /></Gutter>

          <Viewer>
            <Page>
              <RunningHead>208 - B3FB011TP0 - Tightening torques : Braking system</RunningHead>
              <DocTitle>TIGHTENING TORQUES : BRAKING SYSTEM</DocTitle>
              <SectionTitle $top={58}>1. Front brake (Front discs - 266 mm diameter)</SectionTitle>
              <Figure>
                <BrakePlate />
                <Caption>Figure : B3FB0C6D</Caption>
              </Figure>
              <Torques>
                <colgroup>
                  <col style={{ width: 62 }} />
                  <col style={{ width: 204 }} />
                  <col />
                </colgroup>
                <thead>
                  <tr><th>Reference</th><th>Designation</th><th>Tightening torque</th></tr>
                </thead>
                <tbody>
                  {torqueRows.map((r) => (
                    <tr key={r[0]}>{r.map((c) => <td key={c}>{c}</td>)}</tr>
                  ))}
                  <tr><td colSpan={3}>(*) Always to be replaced whenever removed</td></tr>
                </tbody>
              </Torques>
              <SectionTitle $top={24}>2. Front brake (Front discs - 302 mm diameter)</SectionTitle>
              <Folio>1/9</Folio>
            </Page>
          </Viewer>

          <Scrollbar width={22} before={323} thumb={22} after={607} />
          <Gutter $width={23} aria-label="Collapse right panel"><LeftTriangle /></Gutter>
          <Rail>
            {railTools.map((t) => (
              <RailButton key={t.label} $active={t.active} aria-label={t.label}>{t.icon}</RailButton>
            ))}
          </Rail>
        </Body>
      </Window>
    </Shell>
  );
}
